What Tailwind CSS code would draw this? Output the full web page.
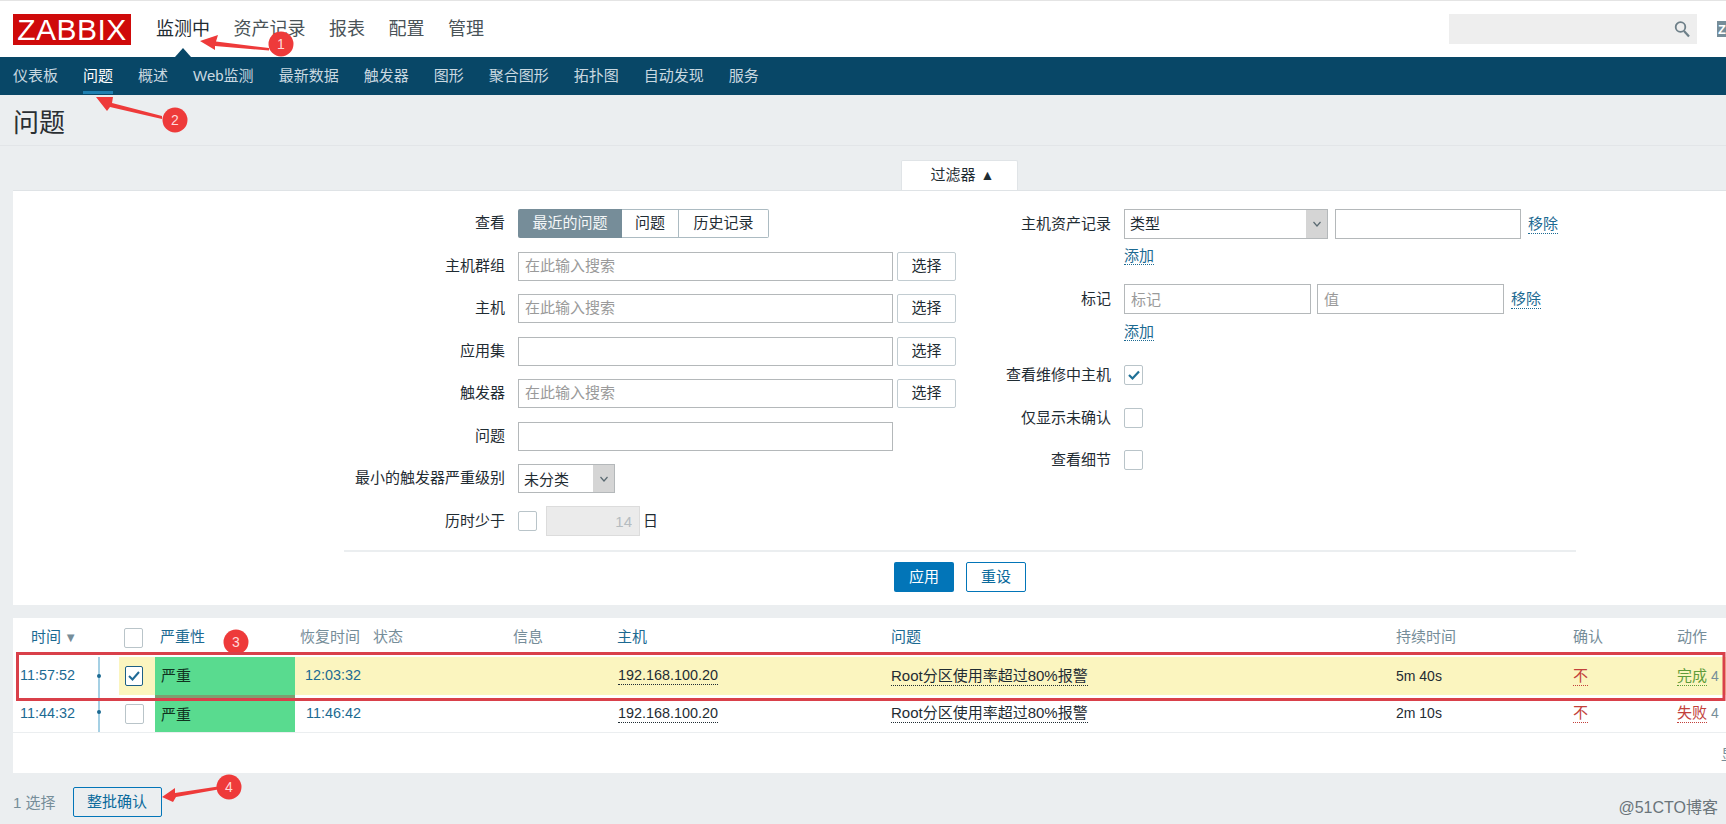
<!DOCTYPE html>
<html lang="zh">
<head>
<meta charset="utf-8">
<script src="https://cdn.jsdelivr.net/npm/@tailwindcss/browser@4"></script>
<title>问题</title>
</head>
<body class="relative h-[824px] w-[1726px] overflow-hidden bg-[#ebeef0] font-['Liberation_Sans','Noto_Sans_CJK_SC',sans-serif] text-[15px] text-[#1f2c33]">

<!-- top bar -->
<header class="flex h-[57px] items-start border-t border-[#e4e4e4] bg-white pl-[13px]">
  <div class="mt-[13px] flex h-[31px] w-[118px] items-center justify-center bg-[#cf0a0a] text-[30px] leading-none tracking-[0.5px] text-white">ZABBIX</div>
  <nav class="ml-[25px] mt-[15px] flex gap-[23.5px] text-[18px] leading-[27px] text-[#4a5358]">
    <a class="relative text-[#1f2c33]">监测中
      <span class="absolute left-[19px] top-[32px] h-0 w-0 border-x-[8px] border-b-[9px] border-x-transparent border-b-[#084767]"></span>
    </a>
    <a>资产记录</a><a>报表</a><a>配置</a><a>管理</a>
  </nav>
  <div class="ml-auto mt-[13px] flex h-[30px] w-[248px] items-center justify-end bg-[#eeeeee] pr-[6px]">
    <svg class="h-[18px] w-[18px]" viewBox="0 0 18 18" fill="none" stroke="#6d7f88" stroke-width="1.8"><circle cx="7.5" cy="7" r="4.8"/><path d="M11 11l5 5.5" stroke-width="2.2"/></svg>
  </div>
  <div class="ml-[20px] mt-[20px] flex h-[16px] w-[9px] items-center overflow-hidden bg-[#768d99] pl-[1px] text-[13px] font-bold leading-none text-white">Z</div>
</header>

<!-- sub nav -->
<nav class="flex h-[38px] items-center gap-[25px] bg-[#084767] pl-[13px] text-[#c9d8e0]">
  <a>仪表板</a>
  <a class="relative text-white">问题<span class="absolute bottom-[-7px] left-0 h-[3px] w-full bg-[#1f7fb0]"></span></a>
  <a>概述</a><a>Web监测</a><a>最新数据</a><a>触发器</a><a>图形</a><a>聚合图形</a><a>拓扑图</a><a>自动发现</a><a>服务</a>
</nav>

<!-- title -->
<div class="flex h-[51px] items-center border-b border-[#e2e5e8] pl-[13px] pt-[5px] text-[26px] leading-none text-[#2a2f33]">问题</div>

<!-- filter tab -->
<div class="ml-[901px] mt-[14px] flex h-[30px] w-[117px] items-center justify-center gap-[5px] rounded-t-[2px] border-x border-t border-[#e0e4e7] bg-white pl-[6px]">
  <span>过滤器</span><span class="text-[14px]">▲</span>
</div>

<!-- filter panel -->
<section class="ml-[13px] h-[415px] border-t border-[#dfe3e6] bg-white">
  <div class="flex h-[359px]">
    <!-- left column -->
    <div class="w-[970px] pt-[18px]">
      <div class="grid auto-rows-[42.5px] grid-cols-[492px_1fr] gap-x-[13px]">
        <label class="flex h-[29px] items-center justify-end">查看</label>
        <div class="flex h-[29px] w-[251px]">
          <span class="flex w-[104px] items-center justify-center rounded-l-[2px] bg-[#768d99] text-[#f4f7f8]">最近的问题</span>
          <span class="flex w-[57px] items-center justify-center border-y border-r border-[#acbbc2]">问题</span>
          <span class="flex w-[90px] items-center justify-center rounded-r-[2px] border-y border-r border-[#acbbc2]">历史记录</span>
        </div>

        <label class="flex h-[29px] items-center justify-end">主机群组</label>
        <div class="flex h-[29px] gap-[4px]">
          <input class="w-[375px] border border-[#b4b8ba] px-[6px] placeholder:text-[#9a9a9a]" placeholder="在此输入搜索">
          <button class="w-[59px] rounded-[2px] border border-[#c2ccd1]">选择</button>
        </div>

        <label class="flex h-[29px] items-center justify-end">主机</label>
        <div class="flex h-[29px] gap-[4px]">
          <input class="w-[375px] border border-[#b4b8ba] px-[6px] placeholder:text-[#9a9a9a]" placeholder="在此输入搜索">
          <button class="w-[59px] rounded-[2px] border border-[#c2ccd1]">选择</button>
        </div>

        <label class="flex h-[29px] items-center justify-end">应用集</label>
        <div class="flex h-[29px] gap-[4px]">
          <input class="w-[375px] border border-[#b4b8ba] px-[6px]">
          <button class="w-[59px] rounded-[2px] border border-[#c2ccd1]">选择</button>
        </div>

        <label class="flex h-[29px] items-center justify-end">触发器</label>
        <div class="flex h-[29px] gap-[4px]">
          <input class="w-[375px] border border-[#b4b8ba] px-[6px] placeholder:text-[#9a9a9a]" placeholder="在此输入搜索">
          <button class="w-[59px] rounded-[2px] border border-[#c2ccd1]">选择</button>
        </div>

        <label class="flex h-[29px] items-center justify-end">问题</label>
        <div class="flex h-[29px]"><input class="w-[375px] border border-[#b4b8ba] px-[6px]"></div>

        <label class="flex h-[29px] items-center justify-end">最小的触发器严重级别</label>
        <div class="flex h-[29px] w-[97px] border border-[#b4b8ba]">
          <span class="flex flex-1 items-center pl-[5px] pt-[3px]">未分类</span>
          <span class="flex w-[21px] items-center justify-center bg-[#d5d5d5]">
            <svg class="h-[10px] w-[10px]" viewBox="0 0 10 10" fill="none" stroke="#5a6a72" stroke-width="1.2"><path d="M1.5 3l3.5 4 3.500-4"/></svg>
          </span>
        </div>

        <label class="flex h-[29px] items-center justify-end">历时少于</label>
        <div class="flex h-[29px] items-center">
          <span class="h-[20px] w-[19px] rounded-[2px] border border-[#b9c4c9]"></span>
          <input disabled value="14" class="ml-[9px] h-[30px] w-[94px] border border-[#dcdcdc] bg-[#ebebeb] pr-[7px] text-right text-[#b5bcc0]">
          <span class="ml-[3px]">日</span>
        </div>
      </div>
    </div>

    <!-- right column -->
    <div class="flex-1 pt-[18px]">
      <div class="grid grid-cols-[128px_1fr] gap-x-[13px]">
        <label class="flex h-[30px] items-center justify-end">主机资产记录</label>
        <div class="flex h-[30px] items-center">
          <div class="flex h-[30px] w-[204px] border border-[#b4b8ba]">
            <span class="flex flex-1 items-center pl-[5px]">类型</span>
            <span class="flex w-[21px] items-center justify-center bg-[#d5d5d5]">
              <svg class="h-[10px] w-[10px]" viewBox="0 0 10 10" fill="none" stroke="#5a6a72" stroke-width="1.2"><path d="M1.5 3l3.5 4 3.500-4"/></svg>
            </span>
          </div>
          <input class="ml-[7px] h-[30px] w-[186px] border border-[#b4b8ba]">
          <a class="ml-[7px] border-b border-dotted border-[#1c6a92] leading-[18px] text-[#1c6a92]">移除</a>
        </div>

        <span></span>
        <div class="mt-[6px] h-[20px]"><a class="border-b border-dotted border-[#1c6a92] text-[#1c6a92]">添加</a></div>

        <label class="mt-[19px] flex h-[30px] items-center justify-end">标记</label>
        <div class="mt-[19px] flex h-[30px] items-center">
          <input class="h-[30px] w-[187px] border border-[#b4b8ba] px-[6px] placeholder:text-[#9a9a9a]" placeholder="标记">
          <input class="ml-[6px] h-[30px] w-[187px] border border-[#b4b8ba] px-[6px] placeholder:text-[#9a9a9a]" placeholder="值">
          <a class="ml-[7px] border-b border-dotted border-[#1c6a92] leading-[18px] text-[#1c6a92]">移除</a>
        </div>

        <span></span>
        <div class="mt-[7px] h-[20px]"><a class="border-b border-dotted border-[#1c6a92] text-[#1c6a92]">添加</a></div>

        <label class="mt-[24px] flex h-[21px] items-center justify-end">查看维修中主机</label>
        <div class="mt-[24px] h-[21px]">
          <span class="flex h-[20px] w-[19px] items-center justify-center rounded-[2px] border border-[#b9c4c9]">
            <svg class="h-[14px] w-[14px]" viewBox="0 0 14 14" fill="none" stroke="#1f7096" stroke-width="2.2"><path d="M2 7l3.500 3.500L12 3.500"/></svg>
          </span>
        </div>

        <label class="mt-[22px] flex h-[20px] items-center justify-end">仅显示未确认</label>
        <div class="mt-[22px] h-[20px]"><span class="block h-[20px] w-[19px] rounded-[2px] border border-[#b9c4c9]"></span></div>

        <label class="mt-[22px] flex h-[20px] items-center justify-end">查看细节</label>
        <div class="mt-[22px] h-[20px]"><span class="block h-[20px] w-[19px] rounded-[2px] border border-[#b9c4c9]"></span></div>
      </div>
    </div>
  </div>
  <div class="ml-[331px] w-[1232px] border-t-2 border-[#ebeef0] pt-[10px]">
    <div class="flex justify-center gap-[12px]">
      <button class="h-[30px] w-[60px] rounded-[2px] bg-[#0275b8] text-white">应用</button>
      <button class="h-[30px] w-[60px] rounded-[2px] border border-[#0275b8] text-[#0a6a9c]">重设</button>
    </div>
  </div>
</section>

<!-- results panel -->
<section class="ml-[13px] mt-[13px] h-[155px] overflow-hidden bg-white">
  <div class="grid h-[39px] grid-cols-[62px_44px_36px_140px_73px_139px_104px_274px_505px_177px_104px_55px] text-[#768d99]">
    <div class="mr-[-2px] flex items-center justify-end gap-[3px] text-[#1c6a92]">时间<span class="text-[13px] leading-none text-[#768d99]">▼</span></div>
    <div></div>
    <div class="flex items-center pl-[5px]"><span class="h-[20px] w-[19px] rounded-[2px] border border-[#b9c4c9]"></span></div>
    <div class="flex items-center pl-[5px] text-[#1c6a92]">严重性</div>
    <div class="flex items-center justify-end pr-[8px]">恢复时间</div>
    <div class="flex items-center pl-[5px]">状态</div>
    <div class="flex items-center pl-[6px]">信息</div>
    <div class="flex items-center pl-[6px] text-[#1c6a92]">主机</div>
    <div class="flex items-center pl-[6px] text-[#1c6a92]">问题</div>
    <div class="flex items-center pl-[6px]">持续时间</div>
    <div class="flex items-center pl-[6px]">确认</div>
    <div class="flex items-center pl-[6px]">动作</div>
  </div>

  <div class="grid h-[38px] grid-cols-[62px_44px_36px_140px_73px_139px_104px_274px_505px_177px_104px_55px] bg-[#fbf5bf]">
    <div class="flex items-center justify-end bg-white text-[14.4px] text-[#1c6a92]">11:57:52</div>
    <div class="relative bg-white"><span class="absolute left-[23px] top-0 h-full w-[2px] bg-[#a5d0e4]"></span><span class="absolute left-[22px] top-[17px] h-[4px] w-[4px] rounded-full bg-[#1c6a92]"></span></div>
    <div class="flex items-center pl-[6px]">
      <span class="flex h-[20px] w-[18px] items-center justify-center rounded-[2px] border border-[#1c5f86] bg-white">
        <svg class="h-[14px] w-[14px]" viewBox="0 0 14 14" fill="none" stroke="#1f6a96" stroke-width="2"><path d="M2 7l3.500 3.500L12 3"/></svg>
      </span>
    </div>
    <div class="flex items-center bg-[#59db8f] pl-[6px] text-[#10331f]">严重</div>
    <div class="flex items-center justify-end pr-[7px] text-[14.4px] text-[#1c6a92]">12:03:32</div>
    <div></div><div></div>
    <div class="flex items-center pl-[7px] text-[14.4px]"><a class="border-b border-dotted border-[#1f2c33] leading-[17px]">192.168.100.20</a></div>
    <div class="flex items-center pl-[6px]"><a class="border-b border-dotted border-[#1f2c33] leading-[18px]">Root分区使用率超过80%报警</a></div>
    <div class="flex items-center pl-[6px] text-[14px]">5m 40s</div>
    <div class="flex items-center pl-[6px] text-[#c2413b]"><a class="border-b border-dotted border-[#c2413b] leading-[18px]">不</a></div>
    <div class="flex items-center gap-[4px] whitespace-nowrap pl-[6px] text-[#5f9c3a]"><a class="border-b border-dotted border-[#5f9c3a] leading-[18px]">完成</a><span class="text-[14px] text-[#768d99]">4</span></div>
  </div>

  <div class="grid h-[38px] grid-cols-[62px_44px_36px_140px_73px_139px_104px_274px_505px_177px_104px_55px] border-b border-[#ebeef0]">
    <div class="flex items-center justify-end text-[14.4px] text-[#1c6a92]">11:44:32</div>
    <div class="relative"><span class="absolute left-[23px] top-0 h-full w-[2px] bg-[#a5d0e4]"></span><span class="absolute left-[22px] top-[15px] h-[4px] w-[4px] rounded-full bg-[#1c6a92]"></span></div>
    <div class="flex items-center pl-[6px]"><span class="h-[20px] w-[19px] rounded-[2px] border border-[#b9c4c9]"></span></div>
    <div class="flex items-center border-t-[3px] border-[#7f9f70] bg-[#59db8f] pl-[6px] text-[#10331f]">严重</div>
    <div class="flex items-center justify-end pr-[7px] text-[14.4px] text-[#1c6a92]">11:46:42</div>
    <div></div><div></div>
    <div class="flex items-center pl-[7px] text-[14.4px]"><a class="border-b border-dotted border-[#1f2c33] leading-[17px]">192.168.100.20</a></div>
    <div class="flex items-center pl-[6px]"><a class="border-b border-dotted border-[#1f2c33] leading-[18px]">Root分区使用率超过80%报警</a></div>
    <div class="flex items-center pl-[6px] text-[14px]">2m 10s</div>
    <div class="flex items-center pl-[6px] text-[#c2413b]"><a class="border-b border-dotted border-[#c2413b] leading-[18px]">不</a></div>
    <div class="flex items-center gap-[4px] whitespace-nowrap pl-[6px] text-[#c2413b]"><a class="border-b border-dotted border-[#c2413b] leading-[18px]">失败</a><span class="text-[14px] text-[#768d99]">4</span></div>
  </div>

  <div class="whitespace-nowrap pl-[1708px] pt-[11px] text-[#768d99]">显示已自动发现的2中的2</div>
</section>

<!-- footer -->
<div class="relative flex h-[51px] items-start pl-[13px] pt-[14px]">
  <span class="mt-[5px] text-[#768d99]">1 选择</span>
  <button class="ml-[17px] h-[30px] w-[89px] rounded-[2px] border border-[#0275b8] text-[#0a6a9c]">整批确认</button>
  <span class="absolute right-[8px] top-[23px] text-[16px] text-[#6a747a]">@51CTO博客</span>
</div>

<!-- annotations drawn over the screenshot -->
<svg class="pointer-events-none absolute left-0 top-0 h-[824px] w-[1726px]" viewBox="0 0 1726 824" fill="#ee3a3a">
  <polygon points="200,41 218,35 216,41.500 269,48 269,50.500 215,46 215,50"/>
  <circle cx="281" cy="44" r="12.500"/>
  <text x="281" y="49" text-anchor="middle" font-size="14" fill="#ffd9d9">1</text>
  <polygon points="96,97 113,97 112,103 162,116 162,119 110,107 107,111"/>
  <circle cx="175" cy="120" r="12.500"/>
  <text x="175" y="125" text-anchor="middle" font-size="14" fill="#ffd9d9">2</text>
  <circle cx="236" cy="642" r="12.500"/>
  <text x="236" y="647" text-anchor="middle" font-size="14" fill="#ffd9d9">3</text>
  <polygon points="162,797 175,788 175,793 218,786.500 218,789.500 176,797 173,802"/>
  <circle cx="229" cy="787" r="12.500"/>
  <text x="229" y="792" text-anchor="middle" font-size="14" fill="#ffd9d9">4</text>
  <rect x="17.500" y="653.500" width="1706.500" height="46" fill="none" stroke="#d9404a" stroke-width="3"/>
</svg>
</body>
</html>
